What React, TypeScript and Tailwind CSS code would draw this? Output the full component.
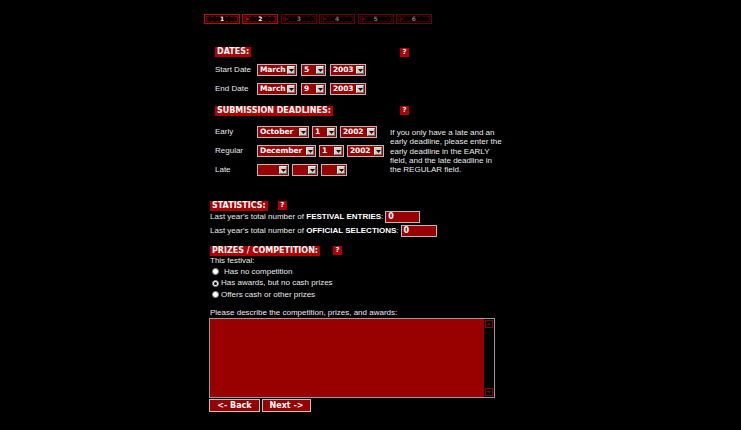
import React from "react";

function Select({ className, value }: { className: string; value?: string }) {
  return (
    <div className={`${className} flex h-[12px] border border-[#b8b8b8] bg-[#990000]`}>
      <span className="min-w-0 flex-1 overflow-hidden whitespace-nowrap pl-[2px] font-['DejaVu_Sans'] text-[7.5px] font-bold leading-[10px] tracking-[-0.1px] text-white">
        {value}
      </span>
      <span className="my-[1px] mr-[1px] flex w-[8px] shrink-0 items-center justify-center border border-[#f0f0f0] border-r-[#707070] border-b-[#707070] bg-[#d4d0c8]">
        <svg width="5" height="3" viewBox="0 0 5 3">
          <path d="M0 0h5L2.5 3z" fill="#111" />
        </svg>
      </span>
    </div>
  );
}

function Header({ children }: { children: React.ReactNode }) {
  return (
    <span className="inline-block bg-[#b00000] px-[2px] font-['DejaVu_Sans'] text-[8px] font-bold leading-[10px] text-white">
      {children}
    </span>
  );
}

function Help() {
  return (
    <span className="flex h-[9px] w-[9px] items-center justify-center bg-[#b00000] font-['DejaVu_Sans'] text-[7px] font-bold leading-none text-white">
      ?
    </span>
  );
}

function Radio({ checked }: { checked?: boolean }) {
  return (
    <span className="flex h-[7px] w-[7px] items-center justify-center rounded-full border border-[#888] bg-white">
      {checked && <span className="h-[3px] w-[3px] rounded-full bg-black" />}
    </span>
  );
}

function Tab({ n, active }: { n: number; active: boolean }) {
  return (
    <div
      className={`relative flex h-[10px] w-[36px] items-center justify-center border ${
        active ? "border-[#d00000]" : "border-[#700000]"
      }`}
    >
      <div
        className={`absolute inset-[1px] border border-dashed ${
          active ? "border-[#800000]" : "border-[#400000]"
        }`}
      />
      {n > 1 && (
        <svg className="absolute left-[3px] top-[2px]" width="4" height="4" viewBox="0 0 4 4">
          <path d="M0 0l4 2-4 2z" fill={active ? "#c00000" : "#600000"} />
        </svg>
      )}
      <span
        className={`relative font-['DejaVu_Sans'] text-[6px] font-bold leading-none ${
          active ? "text-white" : "text-[#777]"
        }`}
      >
        {n}
      </span>
    </div>
  );
}

export default function App() {
  const label = "w-[42px] text-[8px] leading-[12px] text-[#e8e8e8]";
  return (
    <div className="h-[430px] w-[741px] overflow-hidden bg-black font-['Liberation_Sans',sans-serif] text-white">
      <div className="flex gap-[2.4px] pl-[204px] pt-[14px]">
        {[1, 2, 3, 4, 5, 6].map((n) => (
          <Tab key={n} n={n} active={n <= 2} />
        ))}
      </div>

      {/* dates */}
      <div className="pl-[215px]">
        <div className="mt-[23px] flex w-[194px] items-start justify-between">
          <Header>DATES:</Header>
          <div className="mt-[1px]">
            <Help />
          </div>
        </div>
        <div className="mt-[7px] flex flex-col gap-[7px]">
          <div className="flex items-center">
            <span className={label}>Start Date</span>
            <div className="flex gap-[4px]">
              <Select className="w-[40px]" value="March" />
              <Select className="w-[25px]" value="5" />
              <Select className="w-[36px]" value="2003" />
            </div>
          </div>
          <div className="flex items-center">
            <span className={label}>End Date</span>
            <div className="flex gap-[4px]">
              <Select className="w-[40px]" value="March" />
              <Select className="w-[25px]" value="9" />
              <Select className="w-[36px]" value="2003" />
            </div>
          </div>
        </div>

        {/* submission deadlines */}
        <div className="mt-[11px] flex h-[14px] w-[194px] justify-between">
          <div className="self-end">
            <Header>SUBMISSION DEADLINES:</Header>
          </div>
          <Help />
        </div>
        <div className="mt-[6px] flex">
          <div className="flex w-[175px] flex-col gap-[7px]">
            <div className="flex items-center">
              <span className={label}>Early</span>
              <div className="flex gap-[3px]">
                <Select className="w-[52px]" value="October" />
                <Select className="w-[25px]" value="1" />
                <Select className="w-[37px]" value="2002" />
              </div>
            </div>
            <div className="flex items-center">
              <span className={label}>Regular</span>
              <div className="flex gap-[3px]">
                <Select className="w-[59px]" value="December" />
                <Select className="w-[25px]" value="1" />
                <Select className="w-[37px]" value="2002" />
              </div>
            </div>
            <div className="flex items-center">
              <span className={label}>Late</span>
              <div className="flex gap-[3px]">
                <Select className="w-[32px]" />
                <Select className="w-[26px]" />
                <Select className="w-[26px]" />
              </div>
            </div>
          </div>
          <p className="mt-[2px] w-[120px] text-[8px] leading-[9.3px] text-[#e8e8e8]">
            If you only have a late and an
            <br />
            early deadline, please enter the
            <br />
            early deadline in the EARLY
            <br />
            field, and the late deadline in
            <br />
            the REGULAR field.
          </p>
        </div>
      </div>

      {/* statistics */}
      <div className="pl-[210px]">
        <div className="mt-[25px] flex items-start gap-[10px]">
          <Header>STATISTICS:</Header>
          <Help />
        </div>
        <div className="flex flex-col gap-[2px] text-[8px] text-[#e8e8e8]">
          <div className="flex h-[12px] items-center gap-[2px]">
            <span>
              Last year's total number of <b className="text-white">FESTIVAL ENTRIES</b>:
            </span>
            <span className="h-[12px] w-[35px] border border-[#b8b8b8] bg-[#990000] pl-[2px] font-['DejaVu_Sans'] text-[8px] font-bold leading-[10px] text-white">
              0
            </span>
          </div>
          <div className="flex h-[12px] items-center gap-[2px]">
            <span>
              Last year's total number of <b className="text-white">OFFICIAL SELECTIONS</b>:
            </span>
            <span className="h-[12px] w-[36px] border border-[#b8b8b8] bg-[#990000] pl-[2px] font-['DejaVu_Sans'] text-[8px] font-bold leading-[10px] text-white">
              0
            </span>
          </div>
        </div>

        {/* prizes */}
        <div className="mt-[9px] flex items-start gap-[13px]">
          <Header>PRIZES / COMPETITION:</Header>
          <Help />
        </div>
        <div className="text-[8px] text-[#e8e8e8]">
          <div className="h-[10px] leading-[10px]">This festival:</div>
          <div className="flex h-[11.5px] items-center gap-[3px] pl-[2px]">
            <Radio />
            <span className="pl-[2px]">Has no competition</span>
          </div>
          <div className="flex h-[11.5px] items-center gap-[2px] pl-[2px]">
            <Radio checked />
            <span>Has awards, but no cash prizes</span>
          </div>
          <div className="flex h-[11.5px] items-center gap-[2px] pl-[2px]">
            <Radio />
            <span>Offers cash or other prizes</span>
          </div>
          <div className="mt-[7.5px] h-[10px] leading-[10px]">
            Please describe the competition, prizes, and awards:
          </div>
        </div>
        <div className="-ml-[1px] flex h-[80px] w-[286px] border border-[#9a9a9a] bg-[#990000]">
          <div className="flex-1" />
          <div className="flex w-[10px] flex-col justify-between bg-black p-[1px]">
            <span className="flex h-[8px] w-[8px] items-center justify-center border border-[#8a0000]">
              <svg width="4" height="2" viewBox="0 0 4 2">
                <path d="M0 2L2 0l2 2z" fill="#8a0000" />
              </svg>
            </span>
            <span className="flex h-[8px] w-[8px] items-center justify-center border border-[#8a0000]">
              <svg width="4" height="2" viewBox="0 0 4 2">
                <path d="M0 0h4L2 2z" fill="#8a0000" />
              </svg>
            </span>
          </div>
        </div>
        <div className="-ml-[1px] mt-[1px] flex gap-[2px]">
          <button className="h-[13px] w-[51px] border border-[#c0c0c0] bg-[#990000] font-['DejaVu_Sans'] text-[8px] font-bold leading-none text-white">
            &lt;- Back
          </button>
          <button className="h-[13px] w-[49px] border border-[#c0c0c0] bg-[#990000] font-['DejaVu_Sans'] text-[8px] font-bold leading-none text-white">
            Next -&gt;
          </button>
        </div>
      </div>
    </div>
  );
}
